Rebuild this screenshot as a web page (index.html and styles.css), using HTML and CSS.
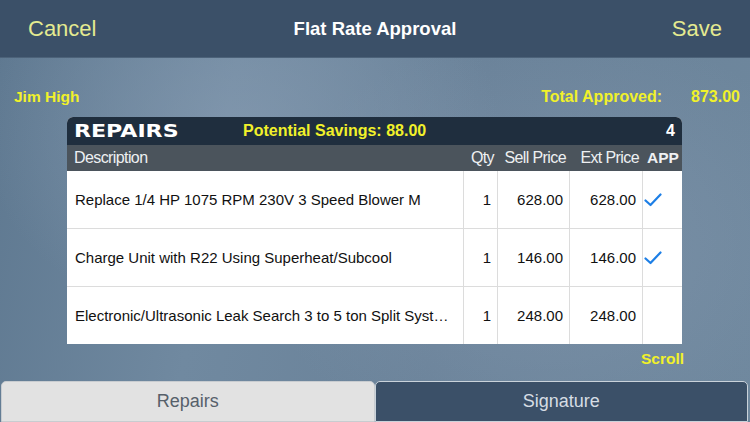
FILE: index.html
```html
<!DOCTYPE html>
<html>
<head>
<meta charset="utf-8">
<link rel="stylesheet" href="styles.css">
</head>
<body>
<div class="screen">
  <header class="nav">
    <span class="nav-btn">Cancel</span>
    <span class="nav-title">Flat Rate Approval</span>
    <span class="nav-btn right">Save</span>
  </header>
  <div class="info">
    <span class="tech">Jim High</span>
    <span class="total"><span class="total-label">Total Approved:</span><span class="total-val">873.00</span></span>
  </div>
  <div class="card">
    <div class="card-head">
      <span class="card-title">REPAIRS</span>
      <span class="savings">Potential Savings: 88.00</span>
      <span class="count">4</span>
    </div>
    <div class="grid">
      <div class="th desc">Description</div>
      <div class="th num">Qty</div>
      <div class="th num">Sell Price</div>
      <div class="th num">Ext Price</div>
      <div class="th app">APP</div>

      <div class="td desc">Replace 1/4 HP 1075 RPM 230V 3 Speed Blower M</div>
      <div class="td num">1</div>
      <div class="td num">628.00</div>
      <div class="td num">628.00</div>
      <div class="td app"><svg class="check" viewBox="0 0 18 14" width="18" height="14"><path d="M1.5 7.5 L6.5 12 L16.5 1.5" fill="none" stroke="#1d7fe6" stroke-width="2.2" stroke-linecap="round" stroke-linejoin="round"/></svg></div>

      <div class="td desc">Charge Unit with R22 Using Superheat/Subcool</div>
      <div class="td num">1</div>
      <div class="td num">146.00</div>
      <div class="td num">146.00</div>
      <div class="td app"><svg class="check" viewBox="0 0 18 14" width="18" height="14"><path d="M1.5 7.5 L6.5 12 L16.5 1.5" fill="none" stroke="#1d7fe6" stroke-width="2.2" stroke-linecap="round" stroke-linejoin="round"/></svg></div>

      <div class="td desc last">Electronic/Ultrasonic Leak Search 3 to 5 ton Split Syst…</div>
      <div class="td num last">1</div>
      <div class="td num last">248.00</div>
      <div class="td num last">248.00</div>
      <div class="td app last"></div>
    </div>
  </div>
  <div class="scroll-row"><span class="scroll">Scroll</span></div>
  <nav class="tabs">
    <div class="tab light">Repairs</div>
    <div class="tab dark">Signature</div>
  </nav>
</div>
</body>
</html>
```

FILE: styles.css
```css
* { box-sizing: border-box; }
html, body { margin: 0; padding: 0; }
body {
  width: 750px;
  height: 422px;
  overflow: hidden;
  font-family: "Liberation Sans", Arial, sans-serif;
}
.screen {
  width: 750px;
  height: 422px;
  display: flex;
  flex-direction: column;
  background:
    radial-gradient(ellipse 260px 200px at 240px 130px, rgba(140,160,182,0.55), rgba(140,160,182,0) 100%),
    radial-gradient(ellipse 300px 220px at 560px 250px, rgba(135,155,178,0.5), rgba(135,155,178,0) 100%),
    linear-gradient(100deg, #5e7890 0%, #7089a0 30%, #6a8299 60%, #6e879d 100%);
}
.nav {
  height: 58px;
  flex: none;
  background: #3b5068;
  display: grid;
  grid-template-columns: 1fr auto 1fr;
  align-items: center;
  padding: 0 28px 0 28px;
  border-bottom: 1px solid #4c6279;
}
.nav-btn {
  color: #e4ea90;
  font-size: 22px;
}
.nav-btn.right { justify-self: end; }
.nav-title {
  color: #ffffff;
  font-weight: bold;
  font-size: 18.5px;
}
.info {
  height: 59px;
  flex: none;
  display: flex;
  justify-content: space-between;
  align-items: center;
  padding: 18px 10px 0 14px;
  color: #f1f12a;
  font-weight: bold;
  font-size: 16px;
}
.tech { font-size: 15.5px; }
.total { display: flex; gap: 29px; }
.card {
  margin-left: 67px;
  width: 615px;
  flex: none;
  background: #fff;
  border-radius: 6px 6px 0 0;
  overflow: hidden;
}
.card-head {
  height: 28px;
  background: #1f2e3e;
  display: flex;
  align-items: center;
  padding: 0 7px 0 7px;
}
.card-title {
  color: #fff;
  font-family: "DejaVu Sans", sans-serif;
  font-weight: 900;
  font-size: 17px;
  display: inline-block;
  transform: scaleX(1.3);
  transform-origin: left center;
  width: 169px;
}
.savings {
  color: #f1f12a;
  font-weight: bold;
  font-size: 16px;
}
.count {
  margin-left: auto;
  color: #fff;
  font-weight: bold;
  font-size: 16px;
}
.grid {
  display: grid;
  grid-template-columns: 397px 34px 72px 73px 39px;
  grid-template-rows: 26px 58px 58px 57px;
}
.th {
  background: #4b545c;
  color: #eef0f2;
  font-size: 16px;
  display: flex;
  align-items: center;
  letter-spacing: -0.6px;
}
.th.desc { padding-left: 7px; }
.th.num { justify-content: flex-end; padding-right: 4px; }
.th.app { font-weight: bold; padding-left: 4px; letter-spacing: 0; font-size: 15.5px; }
.td {
  border-bottom: 1px solid #dcdcdc;
  border-right: 1px solid #dcdcdc;
  display: flex;
  align-items: center;
  font-size: 15px;
  color: #111;
}
.td.last { border-bottom: none; }
.td.app { border-right: none; padding-left: 0; }
.td.desc {
  padding-left: 8px;
  padding-right: 2px;
  white-space: nowrap;
  overflow: hidden;
}
.td.num { justify-content: flex-end; padding-right: 6px; }
.check { margin-left: 1px; }
.scroll-row {
  height: 29px;
  flex: none;
  display: flex;
  justify-content: flex-end;
  align-items: center;
  padding: 0 66px 0 0;
}
.scroll {
  color: #f1f12a;
  font-weight: bold;
  font-size: 15.5px;
}
.tabs {
  display: flex;
  height: 41px;
  margin-top: 8px;
  padding: 0 2px 0 1px;
}
.tab {
  flex: 1;
  display: flex;
  align-items: center;
  justify-content: center;
  font-size: 18px;
  border-radius: 5px 5px 0 0;
}
.tab.light {
  background: #e2e2e2;
  color: #56606a;
  border: 1px solid #c8ccd0;
}
.tab.dark {
  background: #3b5068;
  color: #d6dde4;
  border: 1px solid #c9d2da;
}
```
